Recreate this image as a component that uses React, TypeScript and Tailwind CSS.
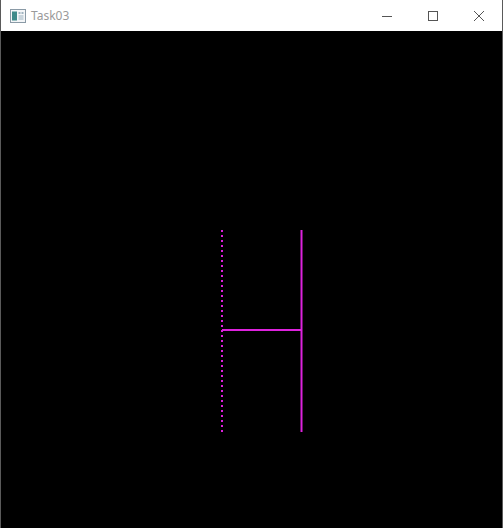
export default function App() {
  return (
    <div className="w-[503px] h-[528px] flex flex-col bg-black border-l border-r border-[#5a5a5a] overflow-hidden">
      {/* Title bar */}
      <div className="h-[31px] shrink-0 bg-white flex items-center">
        <div className="pl-[9px] pr-[5px] flex items-center">
          <svg width="16" height="14" viewBox="0 0 16 14">
            <rect x="0.5" y="0.5" width="15" height="13" fill="#f4f6f8" stroke="#8a9aa6" />
            <rect x="2" y="2.5" width="5" height="9" fill="#3f8a8a" />
            <rect x="8.5" y="3" width="2" height="2" fill="#9fb3c0" />
            <rect x="11.5" y="3" width="2" height="2" fill="#9fb3c0" />
            <rect x="8.5" y="6" width="5" height="5" fill="#c8d4dc" />
          </svg>
        </div>
        <span className="text-[12px] text-[#9a9a9a] font-['Noto_Sans',sans-serif] leading-none">Task03</span>
        <div className="ml-auto flex h-full">
          <div className="w-[46px] h-full flex items-center justify-center">
            <svg width="12" height="12" viewBox="0 0 12 12">
              <line x1="1" y1="6.5" x2="11" y2="6.5" stroke="#555" strokeWidth="1" />
            </svg>
          </div>
          <div className="w-[46px] h-full flex items-center justify-center">
            <svg width="12" height="12" viewBox="0 0 12 12">
              <rect x="1.5" y="1.5" width="9" height="9" fill="none" stroke="#555" strokeWidth="1" />
            </svg>
          </div>
          <div className="w-[46px] h-full flex items-center justify-center">
            <svg width="12" height="12" viewBox="0 0 12 12">
              <path d="M1 1 L11 11 M11 1 L1 11" stroke="#555" strokeWidth="1" />
            </svg>
          </div>
        </div>
      </div>

      {/* Canvas */}
      <div className="flex-1 bg-black">
        <svg width="501" height="497" viewBox="0 0 501 497">
          <line x1="221" y1="199" x2="221" y2="401" stroke="#dd22dd" strokeWidth="2" strokeDasharray="2 3" />
          <line x1="300.5" y1="199" x2="300.5" y2="401" stroke="#dd22dd" strokeWidth="2" />
          <line x1="221" y1="299" x2="301" y2="299" stroke="#dd22dd" strokeWidth="2" />
        </svg>
      </div>
    </div>
  );
}
